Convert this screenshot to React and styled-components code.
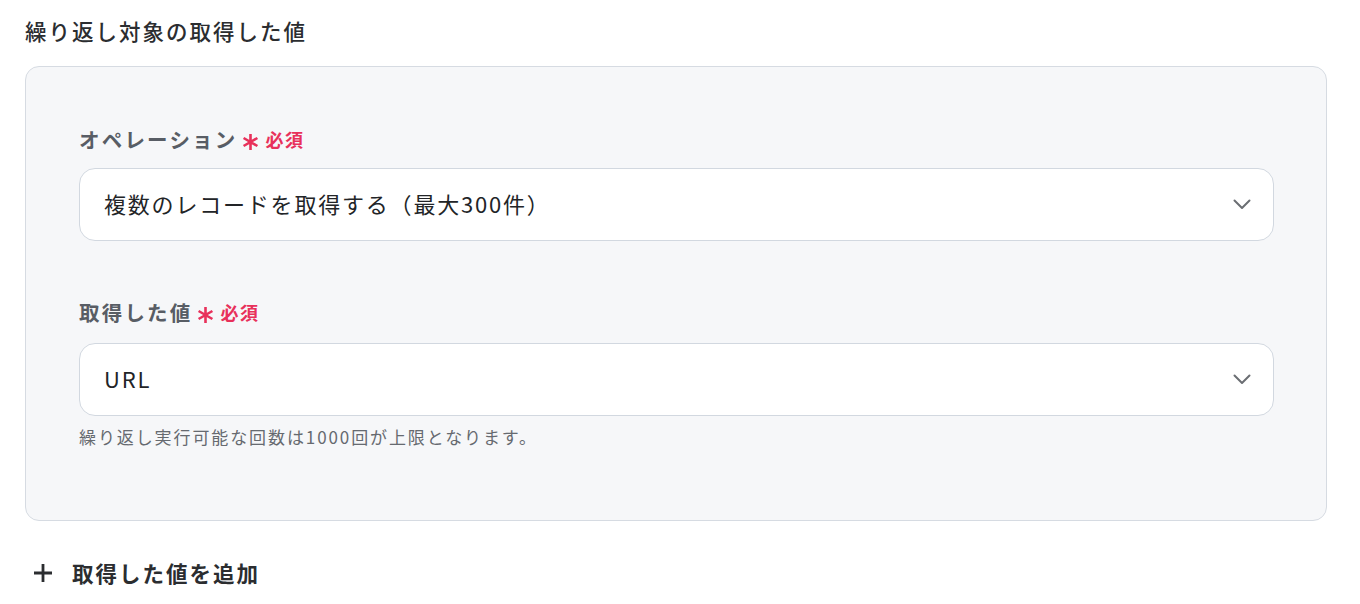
import styled, { createGlobalStyle } from "styled-components";

const GlobalStyle = createGlobalStyle`
  body {
    margin: 0;
    background: #ffffff;
    font-family: "Noto Sans CJK JP", "Noto Sans", sans-serif;
  }
`;

const Page = styled.div`
  padding: 16px 33px 0 25px;
`;

const Title = styled.div`
  font-size: 21.5px;
  line-height: 30px;
  letter-spacing: 2px;
  font-weight: 500;
  color: #2b2d30;
  margin-bottom: 20px;
`;

const Panel = styled.div`
  background: #f6f7f9;
  border: 1px solid #d6dbe2;
  border-radius: 14px;
  padding: 58px 52px 72px 53px;
`;

const Field = styled.div`
  display: flex;
  flex-direction: column;
  & + & {
    margin-top: 57px;
  }
`;

const Label = styled.div`
  display: flex;
  align-items: center;
  font-size: 20.5px;
  line-height: 28px;
  letter-spacing: 2.2px;
  font-weight: 700;
  color: #585d65;
  margin-bottom: ${(p) => p.gap}px;
`;

const Required = styled.span`
  display: inline-flex;
  align-items: center;
  gap: 7px;
  margin-left: 4px;
  color: #e8315b;
  font-size: 18px;
  letter-spacing: 1.5px;
  font-weight: 700;
  & svg {
    margin-top: 5px;
  }
`;

const Select = styled.div`
  height: 71px;
  border: 1px solid #d2d8e0;
  border-radius: 16px;
  background: #ffffff;
  display: flex;
  align-items: center;
  justify-content: space-between;
  padding: 0 22px 0 24px;
  font-size: 22px;
  letter-spacing: 1.8px;
  color: #222427;
  & span {
    margin-top: -3px;
  }
`;

const Hint = styled.div`
  margin-top: 10px;
  font-size: 17px;
  line-height: 22px;
  letter-spacing: 1.9px;
  color: #666a70;
`;

const AddButton = styled.div`
  margin-top: 37px;
  display: flex;
  align-items: center;
  gap: 19px;
  padding-left: 8px;
  font-size: 21.5px;
  line-height: 30px;
  letter-spacing: 2px;
  font-weight: 700;
  color: #2b2d30;
`;

const Chevron = () => (
  <svg width="18" height="11" viewBox="0 0 18 11" fill="none">
    <path d="M1.5 1.5 L9 9 L16.5 1.5" stroke="#6b6e73" strokeWidth="2" strokeLinecap="round" strokeLinejoin="round" />
  </svg>
);

const Asterisk = () => (
  <svg width="17" height="18" viewBox="0 0 17 18" fill="none">
    <path d="M8.5 1 V17 M1.6 5 L15.4 13 M1.6 13 L15.4 5" stroke="#e8315b" strokeWidth="2.6" />
  </svg>
);

const Plus = () => (
  <svg width="20" height="20" viewBox="0 0 20 20" fill="none">
    <path d="M10 1 V19 M1 10 H19" stroke="#2b2d30" strokeWidth="2.8" />
  </svg>
);

const fields = [
  { label: "オペレーション", value: "複数のレコードを取得する（最大300件）", gap: 15 },
  { label: "取得した値", value: "URL", gap: 17, hint: "繰り返し実行可能な回数は1000回が上限となります。" },
];

export default function App() {
  return (
    <>
      <GlobalStyle />
      <Page>
        <Title>繰り返し対象の取得した値</Title>
        <Panel>
          {fields.map((f) => (
            <Field key={f.label}>
              <Label gap={f.gap}>
                {f.label}
                <Required>
                  <Asterisk />
                  必須
                </Required>
              </Label>
              <Select>
                <span>{f.value}</span>
                <Chevron />
              </Select>
              {f.hint && <Hint>{f.hint}</Hint>}
            </Field>
          ))}
        </Panel>
        <AddButton>
          <Plus />
          取得した値を追加
        </AddButton>
      </Page>
    </>
  );
}
